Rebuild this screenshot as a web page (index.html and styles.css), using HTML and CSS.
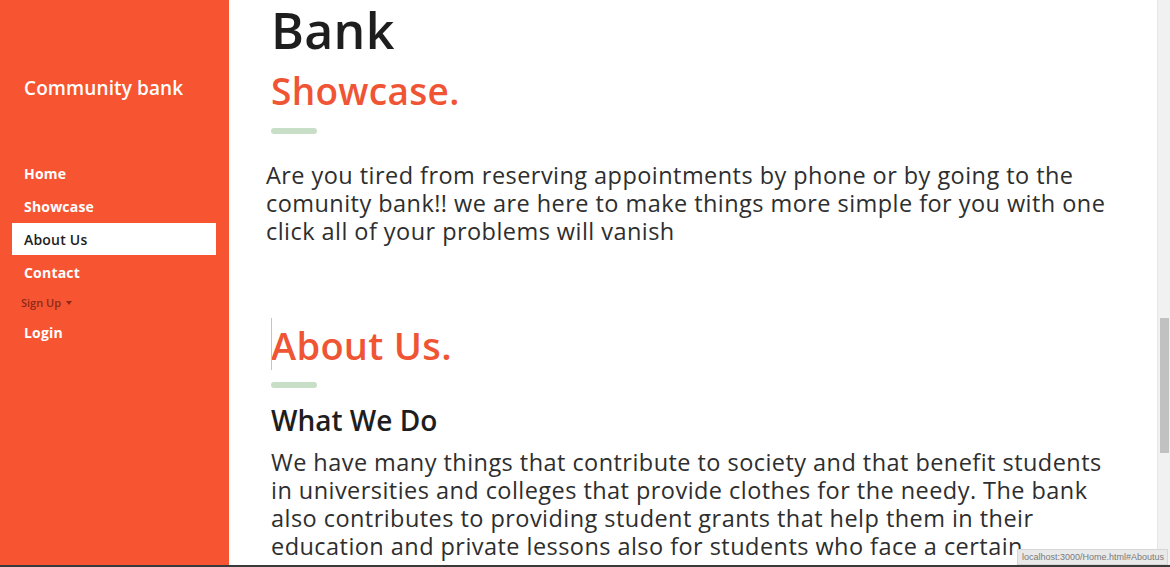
FILE: index.html
```html
<!DOCTYPE html>
<html lang="en">
<head>
<meta charset="utf-8">
<title>Community bank</title>
<link rel="stylesheet" href="styles.css">
</head>
<body>
<div class="page">
  <aside class="sidebar">
    <div class="brand">Community bank</div>
    <ul class="nav">
      <li class="nav-item"><a href="#home">Home</a></li>
      <li class="nav-item"><a href="#showcase">Showcase</a></li>
      <li class="nav-item active"><a href="#Aboutus">About Us</a></li>
      <li class="nav-item"><a href="#contact">Contact</a></li>
      <li class="nav-item dropdown"><a href="#signup">Sign Up <span class="caret"></span></a></li>
      <li class="nav-item"><a href="#login">Login</a></li>
    </ul>
  </aside>
  <main class="main">
    <section class="section showcase">
      <h1 class="title">Bank</h1>
      <h2 class="heading">Showcase.</h2>
      <div class="bar"></div>
      <p class="lead">Are you tired from reserving appointments by phone or by going to the<br>comunity bank!! we are here to make things more simple for you with one<br>click all of your problems will vanish</p>
    </section>
    <section class="section about">
      <h2 class="heading heading-about"><span class="caret-line"></span>About Us.</h2>
      <div class="bar"></div>
      <h3 class="subheading">What We Do</h3>
      <p class="body-text">We have many things that contribute to society and that benefit students<br>in universities and colleges that provide clothes for the needy. The bank<br>also contributes to providing student grants that help them in their<br>education and private lessons also for students who face a certain<br>difficulty in education</p>
    </section>
  </main>
  <div class="scrollbar"><div class="thumb"></div></div>
</div>
<div class="status">localhost:3000/Home.html#Aboutus</div>
<div class="bottom-line"></div>
</body>
</html>
```

FILE: styles.css
```css
* { box-sizing: border-box; }
html, body { margin: 0; padding: 0; }
body {
  width: 1170px;
  height: 567px;
  overflow: hidden;
  font-family: "Open Sans", "Liberation Sans", sans-serif;
  background: #fff;
  position: relative;
}
.page {
  display: flex;
  height: 567px;
}
.sidebar {
  width: 229px;
  flex: none;
  background: #f75432;
  padding-top: 75px;
}
.brand {
  color: #fff;
  font-size: 19px;
  font-weight: 600;
  padding-left: 24px;
  line-height: 26px;
  letter-spacing: 0.1px;
}
.nav {
  list-style: none;
  margin: 56px 0 0;
  padding: 0 13px 0 12px;
}
.nav-item a {
  display: flex;
  align-items: center;
  height: 33px;
  padding-left: 12px;
  color: #fff;
  font-size: 14px;
  font-weight: 700;
  text-decoration: none;
  letter-spacing: 0.2px;
}
.nav-item.active a {
  background: #fff;
  color: #1d1d1d;
  font-weight: 600;
  height: 32px;
  margin-bottom: 1px;
}
.nav-item.dropdown a {
  height: 27px;
  padding-left: 9px;
  font-size: 11px;
  font-weight: 600;
  color: #8e2a17;
  gap: 5px;
  letter-spacing: 0;
}
.caret {
  display: inline-block;
  width: 0;
  height: 0;
  border-left: 3px solid transparent;
  border-right: 3px solid transparent;
  border-top: 4px solid #8e2a17;
}
.main {
  flex: 1;
  padding-left: 42px;
  color: #222;
}
.title {
  margin: 0;
  font-size: 50px;
  line-height: 60px;
  font-weight: 600;
  color: #1e1e1e;
  letter-spacing: 0.3px;
}
.heading {
  margin: 9px 0 0;
  font-size: 37px;
  line-height: 44px;
  font-weight: 600;
  color: #ef5534;
  letter-spacing: 0.3px;
}
.bar {
  width: 46px;
  height: 6px;
  border-radius: 3px;
  background: #c8dec6;
  margin-top: 15px;
}
.lead {
  margin: 27px 0 0 -5px;
  font-size: 23.5px;
  line-height: 28px;
  color: #2e2e2e;
  letter-spacing: 0.45px;
}
.about { margin-top: 77px; }
.heading-about {
  margin-top: 0;
  font-size: 38px;
  line-height: 46px;
  position: relative;
}
.caret-line {
  position: absolute;
  left: 0;
  top: -4px;
  width: 1px;
  height: 52px;
  background: #f3b3a4;
}
.about .bar { margin-top: 14px; }
.subheading {
  margin: 15px 0 0;
  font-size: 28px;
  line-height: 34px;
  font-weight: 600;
  color: #1e1e1e;
}
.body-text {
  margin: 11px 0 0;
  font-size: 23.5px;
  line-height: 28px;
  color: #2e2e2e;
  letter-spacing: 0.45px;
  white-space: nowrap;
}
.scrollbar {
  width: 13px;
  flex: none;
  background: #f1f1f1;
  border-left: 1px solid #e6e6e6;
  padding-top: 318px;
}
.thumb {
  width: 9px;
  height: 135px;
  margin-left: 2px;
  background: #c1c1c1;
}
.status {
  position: absolute;
  right: 2px;
  bottom: 2px;
  width: 151px;
  height: 16px;
  background: #e9e9e9;
  border: 1px solid #d6d6d6;
  color: #7a7a7a;
  font-family: "Liberation Sans", sans-serif;
  font-size: 9px;
  line-height: 14px;
  padding-left: 4px;
  white-space: nowrap;
  overflow: hidden;
}
.bottom-line {
  position: absolute;
  left: 0;
  right: 0;
  bottom: 0;
  height: 2px;
  background: #3a3a3a;
}
```
